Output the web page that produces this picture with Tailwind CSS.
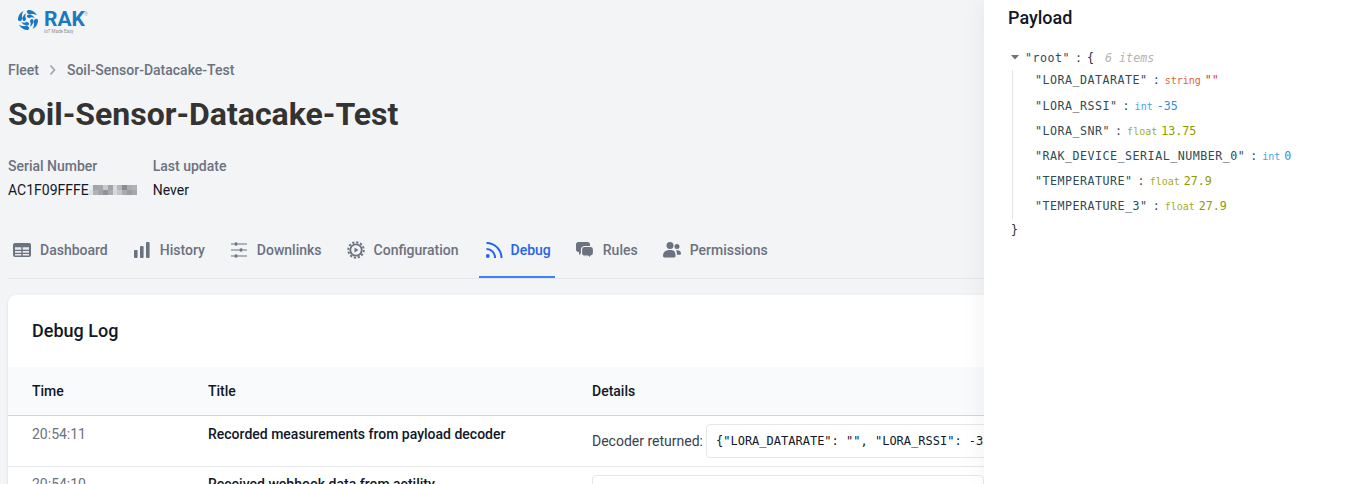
<!doctype html>
<html><head><meta charset="utf-8"><script src="https://cdn.jsdelivr.net/npm/@tailwindcss/browser@4"></script></head>
<body class="m-0 overflow-hidden bg-[#f3f4f6] font-['Roboto',sans-serif]">
<div class="relative h-[484px] w-[1350px] overflow-hidden">
 <div class="w-[1350px] px-2">
  <header class="flex h-[45px] items-start pl-[10px] pt-[10px]">
   <div class="flex items-start gap-[6px]">
    <svg class="h-[20px] w-[20px]" viewBox="0 0 20 20" fill="#1b79c0">
     <g><path d="M10 0C14 0 17.500 2 19 5.500 16.500 3.700 13.500 3.500 11.500 4.800L9.800 3.500C8.500 2.500 8.500 1 10 0Z"/><path d="M9.800 4.800C12.500 4.300 15.500 5.200 16.800 8.200 14.800 7 12.800 7 11.300 8.200L9.500 7.300C8.600 6.600 8.800 5.300 9.800 4.800Z"/></g>
     <g transform="rotate(90 10 10)"><path d="M10 0C14 0 17.500 2 19 5.500 16.500 3.700 13.500 3.500 11.500 4.800L9.800 3.500C8.500 2.500 8.500 1 10 0Z"/><path d="M9.800 4.800C12.500 4.300 15.500 5.200 16.800 8.200 14.800 7 12.800 7 11.300 8.200L9.500 7.300C8.600 6.600 8.800 5.300 9.800 4.800Z"/></g>
     <g transform="rotate(180 10 10)"><path d="M10 0C14 0 17.500 2 19 5.500 16.500 3.700 13.500 3.500 11.500 4.800L9.800 3.500C8.500 2.500 8.500 1 10 0Z"/><path d="M9.800 4.800C12.500 4.300 15.500 5.200 16.800 8.200 14.800 7 12.800 7 11.300 8.200L9.500 7.300C8.600 6.600 8.800 5.300 9.800 4.800Z"/></g>
     <g transform="rotate(270 10 10)"><path d="M10 0C14 0 17.500 2 19 5.500 16.500 3.700 13.500 3.500 11.500 4.800L9.800 3.500C8.500 2.500 8.500 1 10 0Z"/><path d="M9.800 4.800C12.500 4.300 15.500 5.200 16.800 8.200 14.800 7 12.800 7 11.300 8.200L9.500 7.300C8.600 6.600 8.800 5.300 9.800 4.800Z"/></g>
    </svg>
    <div class="relative flex w-[44px] flex-col">
     <span class="text-[21px] font-bold leading-[19px] text-[#1b79c0]">RAK</span>
     <span class="whitespace-nowrap text-[4.500px] leading-[5px] text-[#8b8f96]">IoT Made Easy</span>
     <span class="absolute left-[40px] top-[2px] text-[5px] leading-[5px] text-[#8fb9d8]">®</span>
    </div>
   </div>
  </header>
  <nav class="mt-[17px] flex h-[16px] items-center text-sm font-medium leading-[16px] text-[#6b7280]">
   <span>Fleet</span>
   <svg class="mx-[8px] h-[10px] w-[11px]" viewBox="0 0 11 10" fill="none" stroke="#9ca3af" stroke-width="1.6"><path d="M3.500 .5l4 4.500-4 4.500"/></svg>
   <span class="ml-[1px]">Soil-Sensor-Datacake-Test</span>
  </nav>
  <h1 class="mt-[18px] text-[32px] font-bold leading-[36px] text-[#333]">Soil-Sensor-Datacake-Test</h1>
  <div class="mt-[22px] flex gap-[16px] text-sm leading-[24px]">
   <div><div class="font-medium text-[#6b7280]">Serial Number</div>
    <div class="flex items-center text-[#111827]">AC1F09FFFE<span class="grid h-[10px] w-[48px] grid-cols-10 grid-rows-2">
     <i class="bg-[#e8e9eb]"></i><i class="bg-[#a0a3a8]"></i><i class="bg-[#a3a6ab]"></i><i class="bg-[#c8cacd]"></i><i class="bg-[#a0a3a8]"></i><i class="bg-[#d8d9dc]"></i><i class="bg-[#b4b6ba]"></i><i class="bg-[#888b90]"></i><i class="bg-[#a9abb0]"></i><i class="bg-[#b0b2b6]"></i>
     <i class="bg-[#e0e1e3]"></i><i class="bg-[#b0b2b6]"></i><i class="bg-[#a0a3a8]"></i><i class="bg-[#909398]"></i><i class="bg-[#a8abb0]"></i><i class="bg-[#d8d9dc]"></i><i class="bg-[#c4c6c9]"></i><i class="bg-[#a8aaaf]"></i><i class="bg-[#9a9da2]"></i><i class="bg-[#a5a7ac]"></i>
    </span></div></div>
   <div><div class="font-medium text-[#6b7280]">Last update</div><div class="text-[#111827]">Never</div></div>
  </div>
  <div class="mt-[20px] flex h-[57px] items-stretch gap-[15px] border-b border-[#e5e7eb] text-sm font-medium text-[#6b7280]">
   <a class="-ml-[1px] flex items-center gap-[9px] border-b-2 border-transparent pl-[6px] pr-[4px] pt-[2px]">
    <svg class="h-[18px] w-[18px]" viewBox="0 0 18 18"><rect x="0" y="2" width="18" height="14" rx="2" fill="#6b7280"/><path d="M2 6.200h6.300v2.500H2zM9.700 6.200H16v2.500H9.700zM2 10h6.300v1.800H2zM9.700 10H16v1.800H9.700zM2 13h6.300v1.500H2zM9.700 13H16v1.500H9.700z" fill="#e9eaed"/></svg>Dashboard</a>
   <a class="flex items-center gap-[9px] border-b-2 border-transparent pl-[6px] pr-[4px] pt-[2px]">
    <svg class="h-[18px] w-[18px]" viewBox="0 0 18 18" fill="#6b7280"><rect x="1" y="9" width="3.600" height="8" rx="1"/><rect x="7" y="5" width="3.600" height="12" rx="1"/><rect x="13" y="1" width="3.600" height="16" rx="1"/></svg>History</a>
   <a class="flex items-center gap-[9px] border-b-2 border-transparent pl-[6px] pr-[4px] pt-[2px]">
    <svg class="h-[18px] w-[18px]" viewBox="0 0 18 18" fill="#6b7280"><path d="M1 2.500h3v1H1zM8 2.500h9v1H8zM1 8.500h8v1H1zM13 8.500h4v1h-4zM1 14.500h3v1H1zM8 14.500h9v1H8z"/><circle cx="6" cy="3" r="1.800"/><circle cx="11" cy="9" r="1.800"/><circle cx="6" cy="15" r="1.800"/></svg>Downlinks</a>
   <a class="flex items-center gap-[9px] border-b-2 border-transparent pl-[6px] pr-[4px] pt-[2px]">
    <svg class="h-[18px] w-[18px]" viewBox="0 0 18 18" fill="none" stroke="#6b7280"><circle cx="9" cy="9" r="5.700" stroke-width="1.800"/><circle cx="9" cy="9" r="7.700" stroke-width="2" stroke-dasharray="2.200 1.830"/><path d="M7.500 6.500L11.500 9l-4 2.500z" fill="#6b7280" stroke="none"/></svg>Configuration</a>
   <a class="ml-[1px] flex items-center gap-[8px] border-b-2 border-[#3b82f6] pl-[6px] pr-[4px] pt-[2px] text-[#2563eb]">
    <svg class="h-[18px] w-[18px]" viewBox="0 0 18 18" fill="none" stroke="#2563eb" stroke-width="2"><circle cx="2.800" cy="15" r="1.900" fill="#2563eb" stroke="none"/><path d="M1.500 8a8.500 8.500 0 0 1 8.500 9"/><path d="M1.500 2a15 15 0 0 1 15 15"/></svg>Debug</a>
   <a class="flex items-center gap-[9px] border-b-2 border-transparent pl-[6px] pr-[4px] pt-[2px]">
    <svg class="h-[18px] w-[18px]" viewBox="0 0 18 18"><path d="M2.500 1h9C13 1 14 2 14 3.500v5C14 10 13 11 11.500 11H6.500L3 14v-3h-.5C1 11 0 10 0 8.500v-5C0 2 1 1 2.500 1z" fill="#6b7280"/><path d="M8.500 5.500h6c1.700 0 3 1.200 3 3v3.500c0 1.600-1.200 2.800-2.800 3v2.500L12 15.200H8.500c-1.700 0-3-1.300-3-3V8.500c0-1.800 1.300-3 3-3z" fill="#6b7280" stroke="#f3f4f6" stroke-width="1.200"/></svg>Rules</a>
   <a class="flex items-center gap-[9px] border-b-2 border-transparent pl-[6px] pr-[4px] pt-[2px]">
    <svg class="h-[18px] w-[18px]" viewBox="0 0 18 18" fill="#6b7280"><circle cx="7" cy="4.500" r="3.500"/><path d="M0 15c0-4 2.500-6 7-6s5.500 2 5.500 6c0 1-1 1.500-2 1.500H2c-1 0-2-.5-2-1.500z"/><circle cx="14" cy="5.500" r="2.500"/><path d="M13 9.300c2.900-.5 5 .7 5 3.200 0 .8-.6 1.300-1.300 1.300H14c0-2-.2-3.200-1-4.500z"/></svg>Permissions</a>
  </div>
  <section class="mt-[16px] rounded-t-lg bg-white shadow-sm">
   <h2 class="flex h-[72px] items-center px-6 text-lg font-medium text-[#111827]">Debug Log</h2>
   <div class="grid grid-cols-[176px_384px_1fr] border-b border-[#d1d5db] bg-[#f9fafb] px-6 text-sm font-medium leading-[48px] text-[#111827]">
    <div>Time</div><div>Title</div><div>Details</div>
   </div>
   <div class="grid h-[51px] grid-cols-[176px_384px_1fr] items-start border-b border-[#e5e7eb] px-6 text-sm">
    <div class="pt-[8px] leading-5 text-[#6b7280]">20:54:11</div>
    <div class="pt-[8px] font-medium leading-5 text-[#111827]">Recorded measurements from payload decoder</div>
    <div class="flex items-center whitespace-nowrap pt-[8px] text-[#374151]">Decoder returned:<code class="ml-[3px] h-[34px] w-[340px] rounded border border-[#e5e7eb] bg-white px-[9px] font-['DejaVu_Sans_Mono',monospace] text-xs leading-[32px] text-[#111827]">{"LORA_DATARATE": "", "LORA_RSSI": -35, "LORA_SNR": 13.75}</code></div>
   </div>
   <div class="grid h-[60px] grid-cols-[176px_384px_1fr] items-start px-6 text-sm">
    <div class="pt-[7px] leading-5 text-[#6b7280]">20:54:10</div>
    <div class="pt-[7px] font-medium leading-5 text-[#111827]">Received webhook data from actility</div>
    <div class="pt-[8px]"><div class="h-[40px] w-[392px] rounded border border-[#e5e7eb] bg-white"></div></div>
   </div>
  </section>
 </div>
 <aside class="absolute right-0 top-0 h-[484px] w-[366px] bg-white pl-6 pt-[5px] shadow-[0_0_24px_rgba(0,0,0,0.06)]">
  <h2 class="text-lg font-medium leading-[26px] text-[#111827]">Payload</h2>
  <div class="relative -ml-[2px] mt-[17px] font-['DejaVu_Sans_Mono',monospace] text-[11.65px] leading-[20px] text-[#2f4b55]">
   <div class="flex h-[20px] items-center whitespace-pre">
    <svg class="ml-[5px] mr-[5px] h-[8px] w-[9px]" viewBox="0 0 9 8"><path d="M0 1h8L4 5.500z" fill="#6b7280"/></svg><span class="tracking-[0.5px]">"root"</span><span class="mx-[5px]">:</span><span class="text-[#1f2d3d]">{</span><span class="ml-[11px] italic text-[#b3b3b3]">6 items</span>
   </div>
   <div class="ml-[6px] mt-[2px] flex flex-col border-l border-[#e4e4e4] pl-[22px]">
    <div class="h-[26px] whitespace-pre"><span class="tracking-[0.5px]">"LORA_DATARATE"</span><span class="mx-[5px]">:</span><span class="mr-[4px] text-[10px] text-[#e0633b]">string</span><span class="text-[#e0342a]">""</span></div>
    <div class="h-[25px] whitespace-pre"><span class="tracking-[0.5px]">"LORA_RSSI"</span><span class="mx-[5px]">:</span><span class="mr-[4px] text-[10px] text-[#3ea6e8]">int</span><span class="text-[#2f8fd8]">-35</span></div>
    <div class="h-[25px] whitespace-pre"><span class="tracking-[0.5px]">"LORA_SNR"</span><span class="mx-[5px]">:</span><span class="mr-[4px] text-[10px] text-[#a3ad2a]">float</span><span class="text-[#8f9a00]">13.75</span></div>
    <div class="h-[25px] whitespace-pre"><span class="tracking-[0.5px]">"RAK_DEVICE_SERIAL_NUMBER_0"</span><span class="mx-[5px]">:</span><span class="mr-[4px] text-[10px] text-[#3ea6e8]">int</span><span class="text-[#2f8fd8]">0</span></div>
    <div class="h-[25px] whitespace-pre"><span class="tracking-[0.5px]">"TEMPERATURE"</span><span class="mx-[5px]">:</span><span class="mr-[4px] text-[10px] text-[#a3ad2a]">float</span><span class="text-[#8f9a00]">27.9</span></div>
    <div class="h-[23px] whitespace-pre"><span class="tracking-[0.5px]">"TEMPERATURE_3"</span><span class="mx-[5px]">:</span><span class="mr-[4px] text-[10px] text-[#a3ad2a]">float</span><span class="text-[#8f9a00]">27.9</span></div>
   </div>
   <div class="mt-[1px] pl-[5px] text-[#1f2d3d]">}</div>
  </div>
 </aside>
</div>
</body></html>
